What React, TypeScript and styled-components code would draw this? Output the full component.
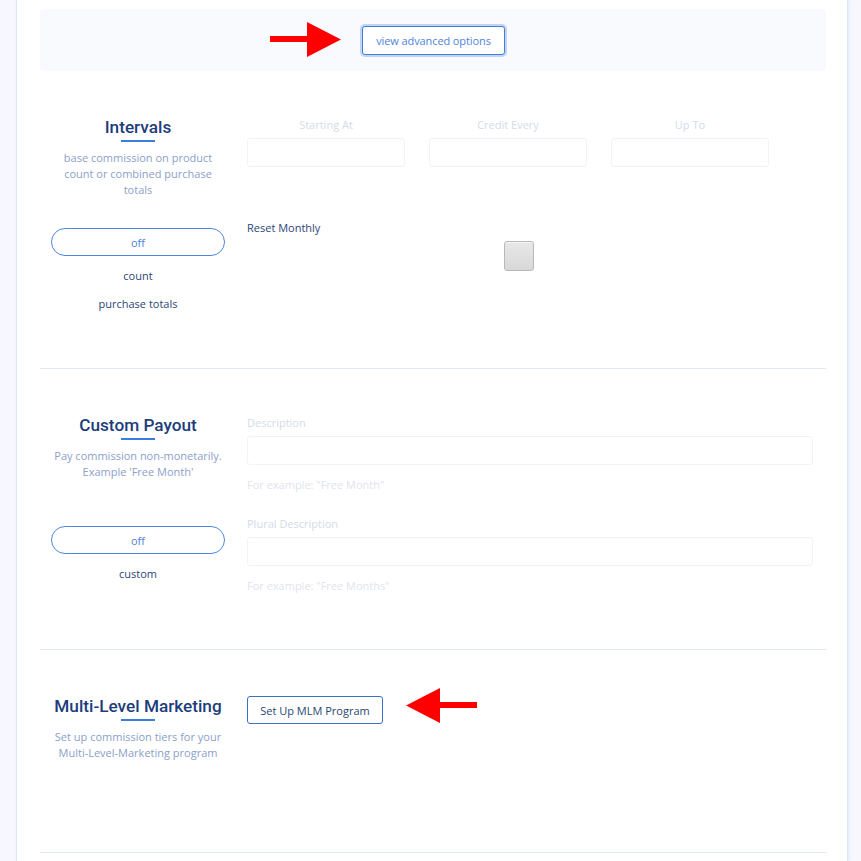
import React from "react";
import styled, { createGlobalStyle } from "styled-components";

const GlobalStyle = createGlobalStyle`
  html, body {
    margin: 0;
    padding: 0;
    background: #f6f8fe;
    font-family: "Open Sans", "Liberation Sans", sans-serif;
  }
  * { box-sizing: border-box; }
`;

const Page = styled.div`
  padding-left: 16px;
  width: 861px;
  min-height: 861px;
`;

const Panel = styled.div`
  width: 832px;
  min-height: 861px;
  background: #fff;
  border-left: 1px solid #dde6f7;
  border-right: 1px solid #dde6f7;
  box-shadow: 1px 0 3px rgba(170, 190, 230, 0.25);
  padding: 9px 21px 0 23px;
`;

const AdvancedStrip = styled.div`
  height: 62px;
  background: #f8fafe;
  border-radius: 4px;
  display: flex;
  align-items: center;
  padding-left: 230px;
  gap: 21px;
`;

const AdvancedButton = styled.button`
  width: 143px;
  height: 29px;
  background: #fff;
  border: 1px solid #3f7de0;
  border-radius: 3px;
  box-shadow: 0 0 0 2px rgba(110, 155, 235, 0.4);
  color: #4f84da;
  font-family: "Open Sans", sans-serif;
  font-size: 11px;
  letter-spacing: -0.1px;
  padding: 0;
  margin-top: 1px;
`;

const Section = styled.section<{ $bottom: number }>`
  display: grid;
  grid-template-columns: 196px 1fr;
  column-gap: 11px;
  padding-top: 46px;
  padding-bottom: ${(p) => p.$bottom}px;
  border-bottom: 1px solid #dfe7f6;
`;

const Side = styled.div`
  display: flex;
  flex-direction: column;
  align-items: center;
  text-align: center;
`;

const Title = styled.h2`
  margin: 0;
  font-family: "Roboto", "Liberation Sans", sans-serif;
  font-weight: 500;
  font-size: 17.2px;
  line-height: 20px;
  color: #1c3d7b;
`;

const Underline = styled.div`
  width: 34px;
  height: 2px;
  background: #3b7ddd;
  margin-top: 3px;
`;

const Blurb = styled.p<{ $minLines: number; $after: number }>`
  margin: 8px 0 ${(p) => p.$after}px;
  min-height: ${(p) => p.$minLines * 16}px;
  font-size: 11px;
  line-height: 16px;
  color: #8ca0ca;
  padding: 0 10px;
`;

const Toggle = styled.button`
  width: 174px;
  height: 28px;
  border: 1px solid #4d86df;
  border-radius: 14px;
  background: #fff;
  color: #4c82da;
  font-family: "Open Sans", sans-serif;
  font-size: 11px;
  padding: 0;
`;

const OptionText = styled.div`
  margin-top: 12px;
  font-size: 11px;
  line-height: 16px;
  color: #2b4676;
`;

const Main = styled.div`
  display: flex;
  flex-direction: column;
  align-items: flex-start;
  padding-right: 13px;
`;

const TripleGrid = styled.div`
  display: grid;
  grid-template-columns: repeat(3, 158px);
  column-gap: 24px;
`;

const Field = styled.div<{ $center?: boolean }>`
  display: flex;
  flex-direction: column;
  text-align: ${(p) => (p.$center ? "center" : "left")};
  width: 100%;
`;

const FieldLabel = styled.label`
  font-size: 11px;
  line-height: 16px;
  color: #d4dbea;
`;

const TextBox = styled.div`
  margin-top: 5px;
  height: 29px;
  width: 100%;
  border: 1px solid #eff3fa;
  border-radius: 3px;
  background: #fff;
`;

const Hint = styled.div`
  margin-top: 12px;
  font-size: 11px;
  line-height: 16px;
  color: #dfe4ef;
`;

const Stack = styled.div`
  display: flex;
  flex-direction: column;
  gap: 23px;
  width: 100%;
`;

const ResetLabel = styled.div`
  margin-top: 53px;
  font-size: 11px;
  line-height: 16px;
  color: #2b4676;
`;

const Checkbox = styled.div`
  margin: 5px 0 0 257px;
  width: 30px;
  height: 30px;
  border: 1px solid #b9b9b9;
  border-radius: 3px;
  background: linear-gradient(#e8e8e8, #d8d8d8);
  box-shadow: inset 0 1px 0 rgba(255, 255, 255, 0.6);
`;

const ActionRow = styled.div`
  display: flex;
  align-items: center;
  gap: 23px;
`;

const OutlineButton = styled.button`
  width: 136px;
  height: 28px;
  background: #fff;
  border: 1px solid #3d6fc4;
  border-radius: 3px;
  color: #2a4675;
  font-family: "Open Sans", sans-serif;
  font-size: 11px;
  padding: 0;
`;

const Arrow = ({ left }: { left?: boolean }) => (
  <svg
    width="71"
    height="35"
    viewBox="0 0 71 35"
    style={{ display: "block", transform: left ? "scaleX(-1)" : undefined, marginTop: left ? -9 : -1 }}
  >
    <rect x="0" y="14" width="40" height="6" fill="#ff0000" />
    <polygon points="37,0 71,17.5 37,35" fill="#ff0000" />
  </svg>
);

export default function App() {
  return (
    <>
      <GlobalStyle />
      <Page>
        <Panel>
          <AdvancedStrip>
            <Arrow />
            <AdvancedButton>view advanced options</AdvancedButton>
          </AdvancedStrip>

          <Section $bottom={56}>
            <Side>
              <Title>Intervals</Title>
              <Underline />
              <Blurb $minLines={3} $after={30}>
                base commission on product count or combined purchase totals
              </Blurb>
              <Toggle>off</Toggle>
              <OptionText>count</OptionText>
              <OptionText>purchase totals</OptionText>
            </Side>
            <Main>
              <TripleGrid>
                {["Starting At", "Credit Every", "Up To"].map((label) => (
                  <Field key={label} $center>
                    <FieldLabel>{label}</FieldLabel>
                    <TextBox />
                  </Field>
                ))}
              </TripleGrid>
              <ResetLabel>Reset Monthly</ResetLabel>
              <Checkbox />
            </Main>
          </Section>

          <Section $bottom={55}>
            <Side>
              <Title>Custom Payout</Title>
              <Underline />
              <Blurb $minLines={3} $after={30}>
                Pay commission non-monetarily. Example 'Free Month'
              </Blurb>
              <Toggle>off</Toggle>
              <OptionText>custom</OptionText>
            </Side>
            <Main>
              <Stack>
                <Field>
                  <FieldLabel>Description</FieldLabel>
                  <TextBox />
                  <Hint>For example: "Free Month"</Hint>
                </Field>
                <Field>
                  <FieldLabel>Plural Description</FieldLabel>
                  <TextBox />
                  <Hint>For example: "Free Months"</Hint>
                </Field>
              </Stack>
            </Main>
          </Section>

          <Section $bottom={91}>
            <Side>
              <Title>Multi-Level Marketing</Title>
              <Underline />
              <Blurb $minLines={2} $after={0}>
                Set up commission tiers for your Multi-Level-Marketing program
              </Blurb>
            </Side>
            <Main>
              <ActionRow>
                <OutlineButton>Set Up MLM Program</OutlineButton>
                <Arrow left />
              </ActionRow>
            </Main>
          </Section>
        </Panel>
      </Page>
    </>
  );
}
